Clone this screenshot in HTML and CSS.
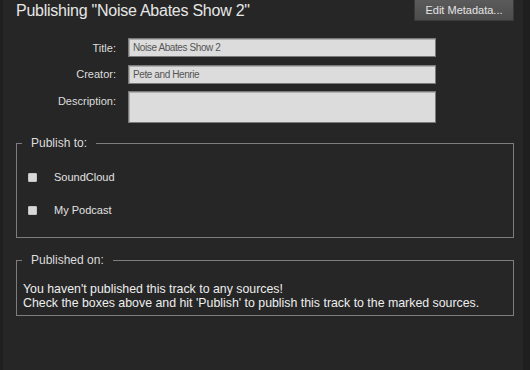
FILE: index.html
```html
<!DOCTYPE html>
<html lang="en">
<head>
<meta charset="UTF-8">
<meta name="viewport" content="width=device-width, initial-scale=1.0">
<title>Publish</title>
<link rel="stylesheet" href="styles.css">
</head>
<body>
<div class="panel">
  <div class="header">
    <h1>Publishing "Noise Abates Show 2"</h1>
    <button class="edit-button">Edit Metadata...</button>
  </div>

  <div class="meta-form">
    <label for="titleInput">Title:</label>
    <input type="text" id="titleInput" value="Noise Abates Show 2">
    <label for="creatorInput">Creator:</label>
    <input type="text" id="creatorInput" value="Pete and Henrie">
    <label for="descInput">Description:</label>
    <textarea id="descInput"></textarea>
  </div>

  <fieldset class="publish-to">
    <legend>Publish to:</legend>
    <div class="service-list">
      <label class="service"><input type="checkbox"><span>SoundCloud</span></label>
      <label class="service"><input type="checkbox"><span>My Podcast</span></label>
    </div>
  </fieldset>

  <fieldset class="published-on">
    <legend>Published on:</legend>
    <p>You haven't published this track to any sources!<br>Check the boxes above and hit 'Publish' to publish this track to the marked sources.</p>
  </fieldset>
</div>
</body>
</html>
```

FILE: styles.css
```css
body {
  margin: 0;
  background-color: #1f1f1f;
  font-family: "Liberation Sans", Arial, sans-serif;
  color: #dddddd;
}
.panel {
  box-sizing: border-box;
  min-height: 100vh;
  margin: 0 7px 0 3px;
  padding: 0 9px 0 13px;
  background-color: #262626;
}
.header {
  display: flex;
  justify-content: space-between;
  align-items: center;
  height: 21px;
}
h1 {
  margin: 0;
  font-size: 16px;
  font-weight: normal;
  line-height: 21px;
  letter-spacing: -0.25px;
  color: #e6e6e6;
}
.edit-button {
  height: 21px;
  padding: 0 10.5px;
  font-family: "Liberation Sans", Arial, sans-serif;
  font-size: 11px;
  color: #e4e4e4;
  background: linear-gradient(#5b5b5b, #4c4c4c);
  border: 1px solid #3a3a3a;
  border-top: none;
  cursor: pointer;
}
.meta-form {
  display: grid;
  grid-template-columns: 100px 308px;
  column-gap: 12px;
  row-gap: 7.5px;
  margin-top: 17.3px;
}
.meta-form label {
  text-align: right;
  font-size: 11px;
  line-height: 13px;
  padding-top: 3.5px;
}
.meta-form input,
.meta-form textarea {
  box-sizing: border-box;
  display: block;
  width: 100%;
  height: 19px;
  margin: 0;
  padding: 0 4px;
  border: 1px solid #7a7a7a;
  box-shadow: inset 1px 1px 0 #b0b0b0;
  background-color: #dcdcdc;
  color: #555555;
  font-family: "Liberation Sans", Arial, sans-serif;
  font-size: 10px;
  letter-spacing: -0.4px;
}
.meta-form textarea {
  height: 32px;
  resize: none;
}
fieldset {
  min-width: 0;
  margin: 0;
  padding: 0;
  border: 1px solid #7d7d7d;
}
legend {
  margin-left: 5px;
  padding: 0 9px;
  font-size: 12px;
  line-height: 14px;
  color: #dddddd;
}
.publish-to {
  margin-top: 13px;
}
.service-list {
  display: flex;
  flex-direction: column;
  gap: 13px;
  padding: 17px 11px 16.5px;
}
.service {
  display: flex;
  align-items: center;
  gap: 17px;
  height: 20px;
  font-size: 11px;
  color: #e2e2e2;
}
.service input {
  -webkit-appearance: none;
  appearance: none;
  box-sizing: border-box;
  width: 9px;
  height: 9px;
  margin: 0;
  border: 1px solid #c4c4c4;
  border-radius: 1px;
  background-color: #d8d8d8;
}
.published-on {
  margin-top: 15.5px;
}
.published-on p {
  margin: 16px 6px 5.5px;
  font-size: 12.35px;
  line-height: 13.3px;
  color: #eeeeee;
}
```
